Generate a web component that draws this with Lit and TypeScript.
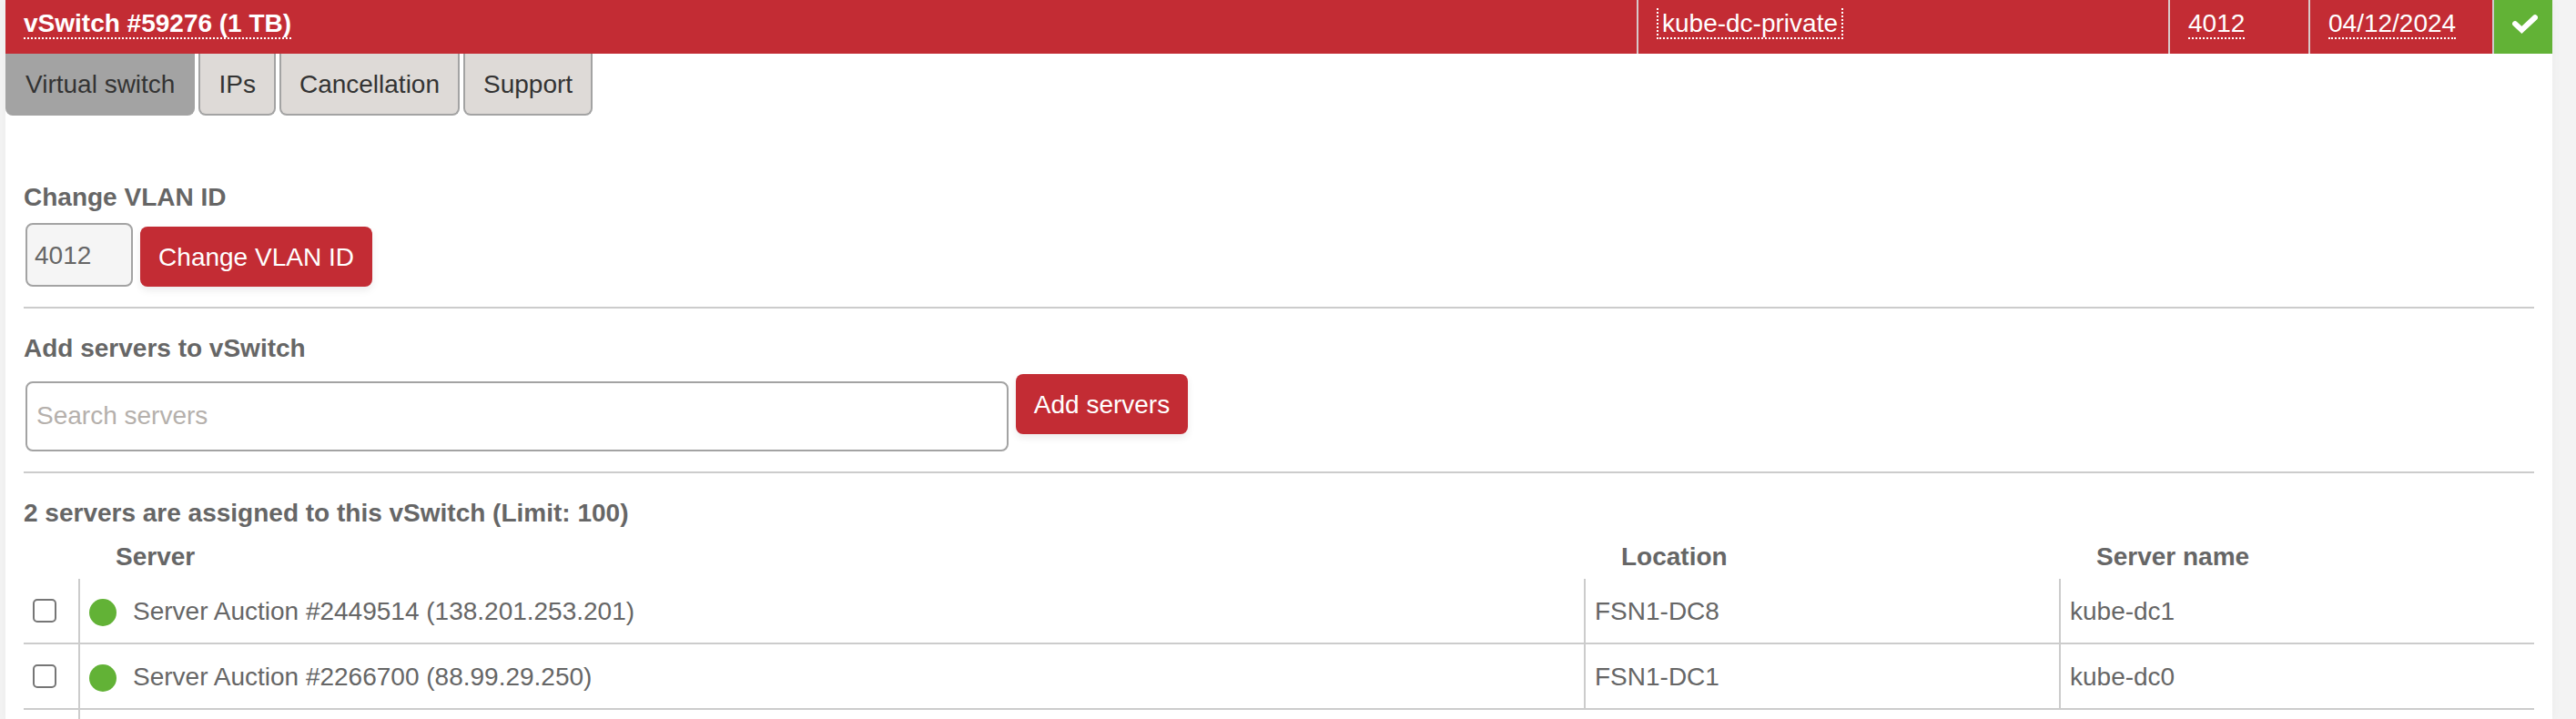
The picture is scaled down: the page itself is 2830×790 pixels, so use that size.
import { LitElement, html, css, svg } from "lit";
import { customElement, state } from "lit/decorators.js";
import { classMap } from "lit/directives/class-map.js";

interface Server {
  label: string;
  location: string;
  name: string;
}

@customElement("switch-header")
export class SwitchHeader extends LitElement {
  static styles = css`
    :host { display: grid; grid-template-columns: 1792px 584px 154px 202px 66px; height: 59px; background: #c32c34; color: #fff; }
    .cell { padding: 9px 0 0 20px; border-left: 2px solid #d8c8c8; white-space: nowrap; }
    .cell.title { border-left: 0; font-weight: bold; }
    .value { display: inline-block; line-height: 31px; padding-top: 1px; border-bottom: 2px dotted #fff; vertical-align: top; }
    .value.boxed { border-left: 2px dotted #fff; border-right: 2px dotted #fff; padding: 1px 4px 0; }
    .status { display: flex; justify-content: center; background: #62b236; border-left: 2px solid #ccc; padding: 16px 0 0 4px; }
    svg { display: block; width: 28px; height: 22px; }
    path { fill: none; stroke: #fff; stroke-width: 6; }
  `;
  render() {
    return html`
      <div class="cell title"><span class="value">vSwitch #59276 (1 TB)</span></div>
      <div class="cell"><span class="value boxed">kube-dc-private</span></div>
      <div class="cell"><span class="value">4012</span></div>
      <div class="cell"><span class="value">04/12/2024</span></div>
      <div class="status">
        <svg viewBox="0 0 28 22">${svg`<path d="M3.1 10.1 L10.4 16.9 L25 3.2" stroke-linejoin="miter" stroke-linecap="round" />`}</svg>
      </div>
    `;
  }
}

@customElement("tab-bar")
export class TabBar extends LitElement {
  static styles = css`
    :host { display: flex; gap: 4px; height: 68px; }
    .tab { box-sizing: border-box; font: inherit; line-height: 32px; color: #333; background: #dedad7; border: 2px solid #a3a3a3; border-top: 0; border-radius: 0 0 8px 8px; padding: 2px 20px 0; white-space: nowrap; }
    .tab.active { background: #a3a3a3; }
  `;
  @state() private active = 0;
  private tabs = ["Virtual switch", "IPs", "Cancellation", "Support"];
  render() {
    return this.tabs.map(
      (t, i) => html`<button class=${classMap({ tab: true, active: i === this.active })} @click=${() => (this.active = i)}>${t}</button>`
    );
  }
}

@customElement("server-table")
export class ServerTable extends LitElement {
  static styles = css`
    :host { display: block; }
    .row { display: grid; grid-template-columns: 60px 1654px 522px 522px; }
    .head { height: 40px; font-weight: bold; line-height: 32px; }
    .head .th { padding-left: 41px; }
    .body { height: 70px; border-bottom: 2px solid #ccc; }
    .td { display: flex; align-items: flex-start; padding: 20px 0 0 10px; border-left: 2px solid #ccc; line-height: 32px; box-sizing: border-box; }
    .td.pick { border-left: 0; padding: 22px 0 0 10px; }
    .check { appearance: none; box-sizing: border-box; width: 26px; height: 26px; margin: 0; border: 2px solid #767676; border-radius: 5px; background: #fff; }
    .dot { width: 30px; height: 30px; border-radius: 50%; background: #62b236; margin: 2px 18px 0 0; }
    .tail { height: 10px; }
    .tail .td { padding: 0; }
  `;
  private servers: Server[] = [
    { label: "Server Auction #2449514 (138.201.253.201)", location: "FSN1-DC8", name: "kube-dc1" },
    { label: "Server Auction #2266700 (88.99.29.250)", location: "FSN1-DC1", name: "kube-dc0" },
  ];
  render() {
    return html`
      <div class="row head">
        <span></span><span class="th">Server</span><span class="th">Location</span><span class="th">Server name</span>
      </div>
      ${this.servers.map(
        (s) => html`<div class="row body">
          <div class="td pick"><input class="check" type="checkbox" /></div>
          <div class="td"><span class="dot"></span>${s.label}</div>
          <div class="td">${s.location}</div>
          <div class="td">${s.name}</div>
        </div>`
      )}
      <div class="row tail"><span></span><div class="td"></div></div>
    `;
  }
}

@customElement("app-root")
export class AppRoot extends LitElement {
  static styles = css`
    :host { display: block; box-sizing: border-box; height: 790px; overflow: hidden; padding: 0 26px 0 6px; background: #f3f3f3; font: 28px/32px "Liberation Sans", Arial, sans-serif; color: #666; }
    .panel { height: 790px; background: #fff; box-shadow: 0 0 10px rgba(0, 0, 0, 0.04); }
    .content { padding: 74px 20px 0; }
    h2 { margin: 0; font-size: 28px; line-height: 32px; font-weight: bold; }
    .line { display: flex; align-items: flex-start; gap: 8px; padding-left: 2px; }
    .vlan { height: 104px; padding-top: 12px; box-sizing: border-box; }
    .search { height: 103px; padding-top: 8px; margin-top: 4px; box-sizing: border-box; }
    .field { box-sizing: border-box; font: inherit; color: #666; border: 2px solid #a3a3a3; border-radius: 8px; background: #fff; outline: 0; }
    .field.id { width: 118px; height: 70px; background: #f5f5f5; padding: 2px 8px 0; }
    .field.query { width: 1080px; height: 77px; padding: 0 10px 2px; margin-top: 8px; }
    .field::placeholder { color: #b5b0ac; opacity: 1; }
    .btn { box-sizing: border-box; height: 66px; font: inherit; color: #fff; background: #c32c34; border: 0; border-radius: 8px; padding: 2px 0 0; box-shadow: 0 4px 8px rgba(0, 0, 0, 0.08); }
    .btn.change { width: 255px; margin-top: 4px; }
    .btn.add { width: 189px; }
    .section { border-bottom: 2px solid #ccc; }
    .section.second { padding-top: 28px; height: 151px; }
    .list { padding-top: 28px; }
    server-table { margin-top: 16px; }
  `;
  render() {
    return html`
      <main class="panel">
        <switch-header></switch-header>
        <tab-bar></tab-bar>
        <div class="content">
          <section class="section">
            <h2>Change VLAN ID</h2>
            <div class="line vlan"><input class="field id" .value=${"4012"} /><button class="btn change">Change VLAN ID</button></div>
          </section>
          <section class="section second">
            <h2>Add servers to vSwitch</h2>
            <div class="line search"><input class="field query" placeholder="Search servers" /><button class="btn add">Add servers</button></div>
          </section>
          <section class="list">
            <h2>2 servers are assigned to this vSwitch (Limit: 100)</h2>
            <server-table></server-table>
          </section>
        </div>
      </main>
    `;
  }
}
